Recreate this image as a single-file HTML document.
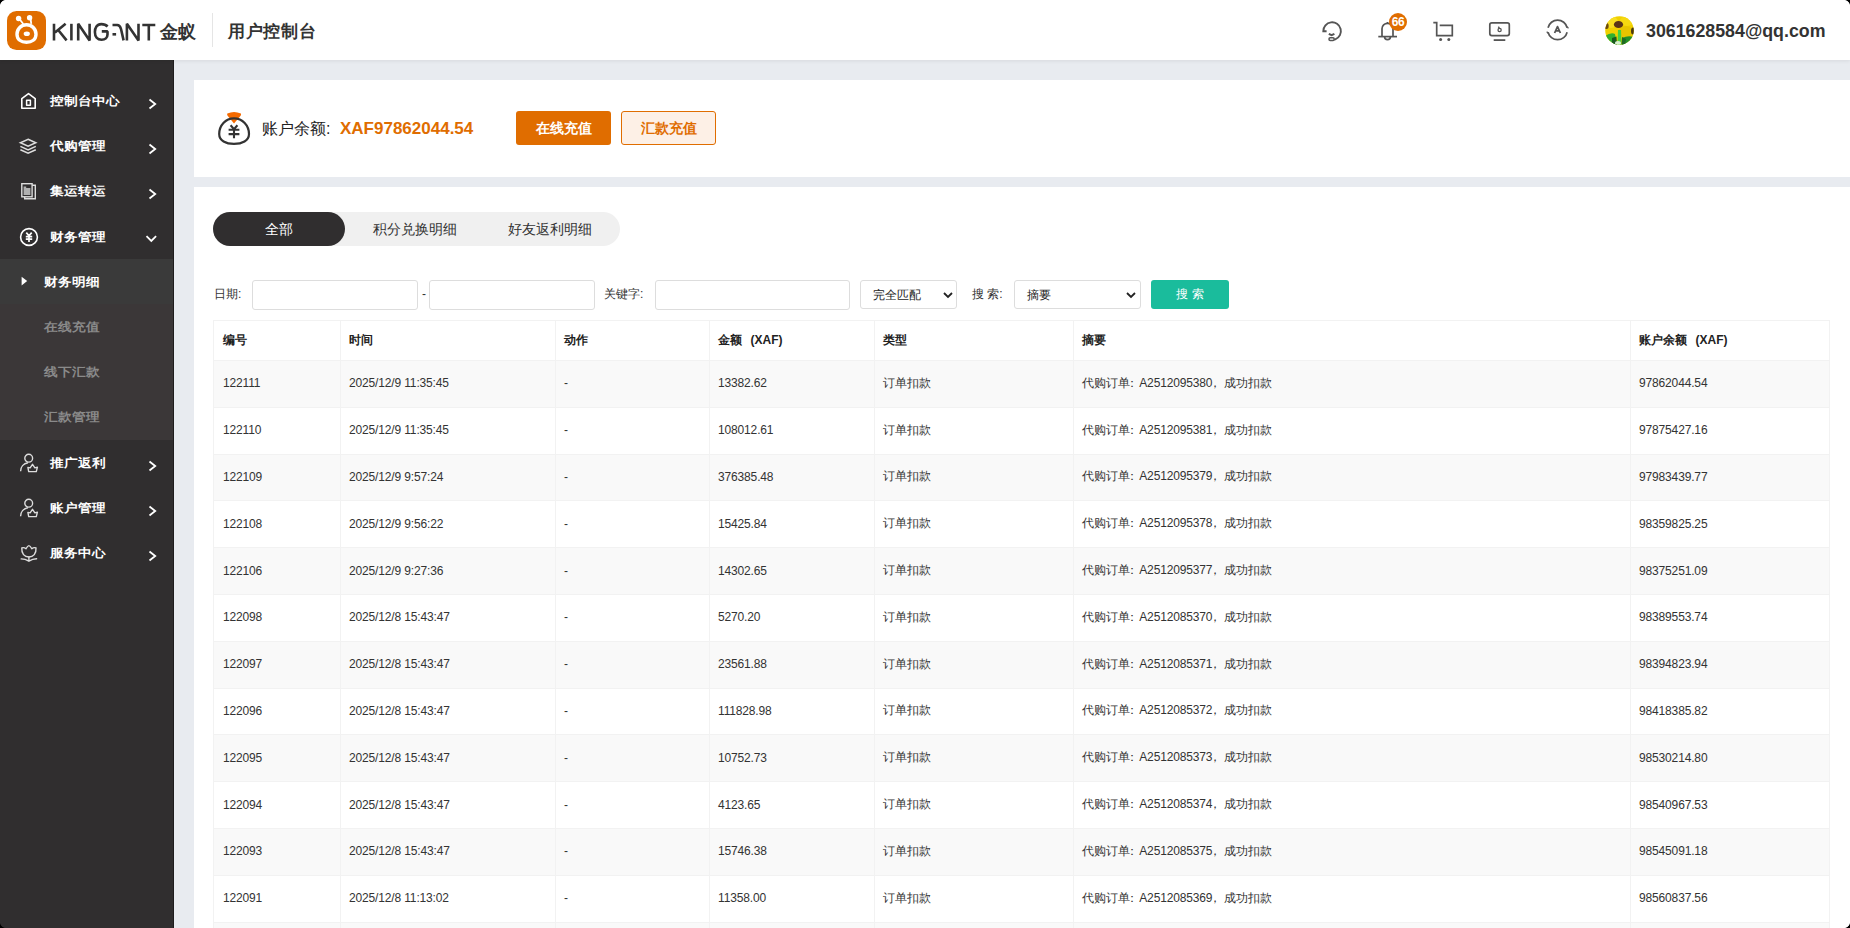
<!DOCTYPE html>
<html><head><meta charset="utf-8">
<style>
*{margin:0;padding:0;box-sizing:border-box}
html,body{width:1850px;height:928px;overflow:hidden;background:#e8ebf0;font-family:"Liberation Sans",sans-serif;color:#333}
.abs{position:absolute}
#hdr{position:absolute;left:0;top:0;width:1850px;height:60px;background:#fff;z-index:2;box-shadow:0 1px 4px rgba(0,0,0,0.08)}
#side{position:absolute;left:0;top:60px;width:174px;height:868px;background:#302e2f;z-index:1}
.mi{position:absolute;left:0;width:174px;height:45px;color:#fff;font-size:13.7px;font-weight:bold}
.mi .t{position:absolute;left:50px;top:15px;line-height:17px;transform:scaleY(0.88)}
.mi svg.ic{position:absolute;left:18px;top:12px}
.mi svg.ch{position:absolute;left:144px;top:16px}
.sub{position:absolute;left:0;width:174px;height:45px;color:#8a8a8a;font-size:13.7px;font-weight:bold}
.sub .t{position:absolute;left:44px;top:15px;line-height:17px;transform:scaleY(0.88)}
.card{position:absolute;background:#fff}
table{border-collapse:collapse;position:absolute;left:213px;top:320px;width:1616px;font-size:12px;table-layout:fixed}
td,th{border:1px solid #f2f2f2;text-align:left;padding:0 0 1px 9px;height:46.8px;white-space:nowrap;color:#333;font-weight:500}
th{height:40px;font-weight:bold;color:#222}
tr.g td{background:#f9f9f9}
td i{font-style:normal}
td+td,th+th{padding-left:8px}
td i.c{margin-left:-3.5px;margin-right:1.5px}
td i.m{margin-left:-3.5px;margin-right:3.5px}
td{letter-spacing:-0.15px}
.btn{position:absolute;height:34px;border-radius:3px;font-size:14px;text-align:center;line-height:34px;font-weight:bold}
.inp{position:absolute;top:280px;height:30px;border:1px solid #ddd;border-radius:3px;background:#fff}
.lbl{position:absolute;top:287px;font-size:12px;color:#333;line-height:14px}
</style></head><body>
<div id="hdr">
  <svg class="abs" style="left:7px;top:11px" width="39" height="39" viewBox="0 0 39 39">
    <rect x="0" y="0" width="39" height="39" rx="9.5" fill="#e06d00"/>
    <path d="M19.5,13.7 C24.8,13.7 29,18 29,23.2 C29,28.6 24.8,31.3 19.5,31.3 C14.2,31.3 10,28.6 10,23.2 C10,18 14.2,13.7 19.5,13.7 Z" fill="none" stroke="#fff" stroke-width="3.4"/>
    <ellipse cx="19.8" cy="22.8" rx="3.1" ry="2.3" fill="#fff"/>
    <circle cx="11.6" cy="7.5" r="2.7" fill="#fff"/>
    <circle cx="22.6" cy="6.8" r="2.7" fill="#fff"/>
    <path d="M13,8.8 L16.3,13 M23.6,8 L24.3,12.8" stroke="#fff" stroke-width="1.8" fill="none"/>
  </svg>
  <svg class="abs" style="left:50px;top:20px" width="112" height="24" viewBox="50 20 112 24">
    <g fill="none" stroke="#333" stroke-width="2.6" stroke-linejoin="bevel">
      <path d="M54,23.8 V40.4 M65.6,23.8 L55,32.4 M58.2,30 L66.6,40.4"/>
      <path d="M71.4,23.8 V40.4"/>
      <path d="M78.2,40.4 V23.8 L89.6,40.4 V23.8"/>
      <path d="M107.6,26.5 C106,24.8 103.8,24.1 101.3,24.1 C96.8,24.1 94.9,28 94.9,32.1 C94.9,36.6 97.3,39.8 101.6,39.8 C105.2,39.8 107.5,37.7 107.5,34.5 V31.4 H101.8"/>
      <path d="M112.5,25 H117.2 C119.5,25 120.4,26.8 121,29 L123.6,40.4"/>
      <path d="M126.9,40.4 V23.8 L138.5,40.4 V23.8"/>
      <path d="M142.3,25 H155.3 M148.8,25 V40.4"/>
    </g>
    <rect x="112.5" y="33" width="3.6" height="2.6" fill="#333"/>
  </svg>
  <div class="abs" style="left:160px;top:20px;font-size:17.5px;color:#333;line-height:24px;font-weight:bold">金蚁</div>
  <div class="abs" style="left:212px;top:13px;width:1px;height:34px;background:#e5e5e5"></div>
  <div class="abs" style="left:228px;top:20px;font-size:17.3px;letter-spacing:0.7px;font-weight:bold;color:#333;line-height:22px">用户控制台</div>

  <svg class="abs" style="left:1320px;top:19px" width="24" height="24" viewBox="0 0 24 24" fill="none" stroke="#555" stroke-width="1.9" stroke-linecap="butt">
    <path d="M6.6,12.2 H3.3 A8.8,8.8 0 1 1 15.3,20.3 L14.2,20.6"/>
    <path d="M8.8,14.8 L11.6,16.2 L14.4,14.8" stroke-width="2"/>
    <rect x="9" y="18.8" width="5.2" height="2.6" rx="1.2" stroke-width="1.5"/>
  </svg>
  <svg class="abs" style="left:1376px;top:19px" width="24" height="24" viewBox="0 0 24 24" fill="none" stroke="#555" stroke-width="1.7">
    <path d="M6,17.6 V9.8 A5.5,5.5 0 0 1 17,9.8 V17.6"/>
    <path d="M2.3,17.6 H21"/>
    <path d="M8.6,17.8 A2.9,2.9 0 0 0 14.4,17.8" />
    <path d="M11.5,4.4 V3"/>
  </svg>
  <div class="abs" style="left:1389px;top:13px;width:18px;height:18px;border-radius:9px;background:#e06d00;color:#fff;font-size:12px;font-weight:bold;line-height:18px;text-align:center;letter-spacing:-0.3px">66</div>
  <svg class="abs" style="left:1430px;top:19px" width="26" height="24" viewBox="0 0 26 24" fill="none" stroke="#555" stroke-width="1.7">
    <path d="M3.3,3.7 H6.7 V16.7 H22.3 V6.3 H9.7"/>
    <circle cx="10.6" cy="20.6" r="1.5" fill="#555" stroke="none"/>
    <circle cx="18.8" cy="20.6" r="1.5" fill="#555" stroke="none"/>
  </svg>
  <svg class="abs" style="left:1486px;top:19px" width="26" height="24" viewBox="0 0 26 24" fill="none" stroke="#555" stroke-width="1.7">
    <rect x="3.8" y="3.8" width="19.5" height="12.8" rx="2"/>
    <path d="M7.7,21.1 H19.3" stroke-width="1.8"/>
    <path d="M12.4,7.6 L13.4,9.6" stroke-width="1.3"/><circle cx="13.6" cy="11" r="1.6" stroke-width="1.3"/>
  </svg>
  <svg class="abs" style="left:1545px;top:18px" width="26" height="24" viewBox="0 0 26 24" fill="none" stroke="#555" stroke-width="1.7">
    <path d="M3.04,9.75 A9.8,9.8 0 0 1 22.16,9.75"/>
    <path d="M22.13,14.2 A9.8,9.8 0 0 1 3.07,14.2"/>
    <path d="M22.3,9.9 L23.3,9.1 M2.9,14.1 L1.9,14.9" stroke-width="2"/>
    <path d="M9.6,15 L12.5,8.6 L15.4,15 M10.6,12.9 H14.4" stroke-width="1.8" stroke-linejoin="round"/>
  </svg>
  <svg class="abs" style="left:1605px;top:16px" width="29" height="29" viewBox="0 0 29 29">
    <defs><clipPath id="av"><circle cx="14.5" cy="14.5" r="14.3"/></clipPath></defs>
    <g clip-path="url(#av)">
      <rect width="29" height="29" fill="#f0d000"/>
      <ellipse cx="6" cy="6" rx="7" ry="6" fill="#f8de20"/>
      <ellipse cx="22" cy="5" rx="7" ry="5" fill="#f6d810"/>
      <ellipse cx="21" cy="16" rx="8" ry="6" fill="#e8c400"/>
      <ellipse cx="13.5" cy="8.5" rx="4.6" ry="3.6" fill="#5a3418"/>
      <ellipse cx="1.5" cy="10" rx="2.2" ry="3" fill="#6a4a10"/>
      <ellipse cx="28" cy="15" rx="2" ry="3.5" fill="#4a3a10"/>
      <path d="M0,20 Q6,16 10,18 L12,29 L0,29 Z" fill="#30b030"/>
      <path d="M17,22 Q23,19 29,21 L29,29 L17,29 Z" fill="#22902a"/>
      <path d="M13,14 L16,14 L16.5,29 L12.5,29 Z" fill="#44d040"/>
      <path d="M7,22 L11.5,20.5 L12,29 L7,29 Z" fill="#1a5a20"/>
      <path d="M17,21 L21,23 L20,29 L16.5,29 Z" fill="#1e6a24"/>
      <ellipse cx="13" cy="27" rx="3" ry="2" fill="#d8f0d0"/>
    </g>
  </svg>
  <div class="abs" style="left:1646px;top:20px;font-size:17.8px;font-weight:bold;color:#333;line-height:22px">3061628584@qq.com</div>
</div>
<div id="side">
  <div class="mi" style="top:18px">
    <svg class="ic" width="22" height="22" viewBox="0 0 22 22" fill="none" stroke="#fff" stroke-width="1.6" stroke-linejoin="round"><path d="M3.8,8.6 L10.5,3.6 L17.2,8.6 V18.2 H3.8 Z"/><rect x="8.6" y="10.3" width="3.8" height="5" stroke-width="1.5"/></svg>
    <span class="t">控制台中心</span>
    <svg class="ch" width="16" height="20" viewBox="0 0 16 20" fill="none" stroke="#fff" stroke-width="1.8"><path d="M5.5,5.5 L11.2,10 L5.5,14.5"/></svg>
  </div>
  <div class="mi" style="top:63px">
    <svg class="ic" width="22" height="22" viewBox="0 0 22 22" fill="none" stroke="#ddd" stroke-width="1.5"><path d="M10.1,4.3 L17.8,7.8 L10.1,11.3 L2.4,7.8 Z"/><path d="M2.4,11.4 L10.1,14.9 L17.8,11.4"/><path d="M2.4,14.8 L10.1,18.3 L17.8,14.8"/></svg>
    <span class="t">代购管理</span>
    <svg class="ch" width="16" height="20" viewBox="0 0 16 20" fill="none" stroke="#fff" stroke-width="1.8"><path d="M5.5,5.5 L11.2,10 L5.5,14.5"/></svg>
  </div>
  <div class="mi" style="top:108px">
    <svg class="ic" width="22" height="22" viewBox="0 0 22 22" fill="none" stroke="#ddd" stroke-width="1.4"><rect x="3.8" y="3.7" width="10.3" height="13.1"/><path d="M14.1,5.2 H17.3 V18.8 H6.7 V16.8"/><path d="M5.6,6.6 H8.2 V8 H12.4 V15 H5.6 Z" fill="#b0b0b0" stroke="none"/></svg>
    <span class="t">集运转运</span>
    <svg class="ch" width="16" height="20" viewBox="0 0 16 20" fill="none" stroke="#fff" stroke-width="1.8"><path d="M5.5,5.5 L11.2,10 L5.5,14.5"/></svg>
  </div>
  <div class="mi" style="top:154px">
    <svg class="ic" width="22" height="22" viewBox="0 0 22 22" fill="none" stroke="#fff" stroke-width="1.6"><circle cx="11" cy="11" r="8.4"/><path d="M8.3,6.6 L11,9.8 L13.7,6.6 M7.8,10.6 H14.2 M7.8,13.2 H14.2 M11,9.8 V16" stroke-width="1.7"/></svg>
    <span class="t">财务管理</span>
    <svg class="ch" width="16" height="20" viewBox="0 0 16 20" fill="none" stroke="#fff" stroke-width="1.8"><path d="M2.5,6.2 L7.3,11 L12.1,6.2"/></svg>
  </div>
  <div class="abs" style="left:0;top:199px;width:174px;height:181px;background:#3b3738"></div>
  <div class="sub" style="top:199px;background:#3a3a3a;color:#fff">
    <svg class="abs" style="left:20px;top:16px" width="10" height="12" viewBox="0 0 10 12"><path d="M1.6,1.8 L7.2,6 L1.6,10.4 Z" fill="#fff"/></svg>
    <span class="t">财务明细</span>
  </div>
  <div class="sub" style="top:244px"><span class="t">在线充值</span></div>
  <div class="sub" style="top:289px"><span class="t">线下汇款</span></div>
  <div class="sub" style="top:334px"><span class="t">汇款管理</span></div>
  <div class="mi" style="top:380px">
    <svg class="ic" width="22" height="22" viewBox="0 0 22 22" fill="none" stroke="#ddd" stroke-width="1.4"><circle cx="10.7" cy="6.2" r="3.9"/><path d="M2.6,19.3 C2.6,15 5.5,11.5 10,10.8"/><path d="M9.9,15.4 L12.1,15.9 L14.5,12.3 L16.9,15.9 L19.4,15.1 L18.3,19.6 H10.7 Z" stroke-linejoin="round"/></svg>
    <span class="t">推广返利</span>
    <svg class="ch" width="16" height="20" viewBox="0 0 16 20" fill="none" stroke="#fff" stroke-width="1.8"><path d="M5.5,5.5 L11.2,10 L5.5,14.5"/></svg>
  </div>
  <div class="mi" style="top:425px">
    <svg class="ic" width="22" height="22" viewBox="0 0 22 22" fill="none" stroke="#ddd" stroke-width="1.4"><circle cx="10.7" cy="6.2" r="3.9"/><path d="M2.6,19.3 C2.6,15 5.5,11.5 10,10.8"/><path d="M9.9,15.4 L12.1,15.9 L14.5,12.3 L16.9,15.9 L19.4,15.1 L18.3,19.6 H10.7 Z" stroke-linejoin="round"/></svg>
    <span class="t">账户管理</span>
    <svg class="ch" width="16" height="20" viewBox="0 0 16 20" fill="none" stroke="#fff" stroke-width="1.8"><path d="M5.5,5.5 L11.2,10 L5.5,14.5"/></svg>
  </div>
  <div class="mi" style="top:470px">
    <svg class="ic" width="22" height="22" viewBox="0 0 22 22" fill="none" stroke="#ddd" stroke-width="1.4"><path d="M3.8,6 Q5.8,5 8,6.8 Q9.6,3.6 10.9,3.6 Q12.2,3.6 13.8,6.8 Q16,5 18,6 C18.4,11.6 15.4,15 10.9,15 C6.4,15 3.4,11.6 3.8,6 Z" stroke-linejoin="round"/><path d="M3.2,16.9 Q7.2,16.9 10.9,19.2 Q14.6,16.9 18.6,16.8 M10.9,15 V19" stroke-linecap="round"/></svg>
    <span class="t">服务中心</span>
    <svg class="ch" width="16" height="20" viewBox="0 0 16 20" fill="none" stroke="#fff" stroke-width="1.8"><path d="M5.5,5.5 L11.2,10 L5.5,14.5"/></svg>
  </div>
  <div class="abs" style="left:173px;top:0;width:1px;height:868px;background:#1e1c1d"></div>
</div>
<div class="card" style="left:194px;top:80px;width:1656px;height:97px"></div>
<div class="card" style="left:194px;top:187px;width:1656px;height:741px"></div>
<svg class="abs" style="left:216px;top:110px" width="36" height="36" viewBox="0 0 36 36">
  <path d="M11.3,3.6 Q18,0.6 24.9,3.6 Q25.4,4.6 24.6,5.8 L18,13.4 L11.6,5.8 Q10.8,4.6 11.3,3.6 Z" fill="#f56a00"/>
  <path d="M18,8.4 C9.5,8.4 3.2,15.5 3.2,24 C3.2,30.8 10,33.8 18,33.8 C26,33.8 33,30.8 33,24 C33,15.5 26.5,8.4 18,8.4 Z" fill="none" stroke="#333" stroke-width="2.2"/>
  <path d="M14.6,15.2 L18,19.2 L21.4,15.2 M12.6,19.8 H23.4 M12.6,24.1 H23.4 M18,19.2 V28.2" fill="none" stroke="#333" stroke-width="2.1"/>
</svg>
<div class="abs" style="left:262px;top:119px;font-size:16px;color:#222;line-height:20px;font-weight:500">账户余额:</div>
<div class="abs" style="left:340px;top:119px;font-size:17px;color:#e06d00;line-height:20px;font-weight:bold">XAF97862044.54</div>
<div class="btn" style="left:516px;top:111px;width:95px;background:#e06d00;color:#fff">在线充值</div>
<div class="btn" style="left:621px;top:111px;width:95px;background:#fdf0e6;color:#e06d00;border:1px solid #e06d00;line-height:32px">汇款充值</div>

<div class="abs" style="left:213px;top:212px;width:407px;height:34px;border-radius:17px;background:#f0f0f0"></div>
<div class="abs" style="left:213px;top:212px;width:132px;height:34px;border-radius:17px;background:#302e2f;color:#fff;font-size:14px;line-height:34px;text-align:center">全部</div>
<div class="abs" style="left:373px;top:212px;font-size:14px;line-height:34px;color:#333">积分兑换明细</div>
<div class="abs" style="left:508px;top:212px;font-size:14px;line-height:34px;color:#333">好友返利明细</div>

<div class="lbl" style="left:214px">日期:</div>
<div class="inp" style="left:252px;width:166px"></div>
<div class="lbl" style="left:422px">-</div>
<div class="inp" style="left:429px;width:166px"></div>
<div class="lbl" style="left:604px">关键字:</div>
<div class="inp" style="left:655px;width:195px"></div>
<div class="inp" style="left:860px;width:97px;height:29px"><span class="abs" style="left:12px;top:7px;font-size:12px;line-height:14px;color:#222">完全匹配</span>
  <svg class="abs" style="left:81px;top:9px" width="12" height="10" viewBox="0 0 12 10"><path d="M2,3 L6,7 L10,3" fill="none" stroke="#222" stroke-width="1.8"/></svg></div>
<div class="lbl" style="left:972px">搜 索:</div>
<div class="inp" style="left:1014px;width:127px;height:29px"><span class="abs" style="left:12px;top:7px;font-size:12px;line-height:14px;color:#222">摘要</span>
  <svg class="abs" style="left:110px;top:9px" width="12" height="10" viewBox="0 0 12 10"><path d="M2,3 L6,7 L10,3" fill="none" stroke="#222" stroke-width="1.8"/></svg></div>
<div class="abs" style="left:1151px;top:280px;width:78px;height:29px;border-radius:3px;background:#1abc9c;color:#fff;font-size:12px;font-weight:500;line-height:29px;text-align:center">搜 索</div>

<table>
<colgroup><col style="width:127px"><col style="width:215px"><col style="width:154px"><col style="width:165px"><col style="width:199px"><col style="width:557px"><col style="width:199px"></colgroup>
<tr><th>编号</th><th>时间</th><th>动作</th><th>金额<span style="margin-left:8.5px">(XAF)</span></th><th>类型</th><th>摘要</th><th>账户余额<span style="margin-left:8.5px">(XAF)</span></th></tr>
<tr class="g"><td>122111</td><td>2025/12/9 11:35:45</td><td>-</td><td>13382.62</td><td>订单扣款</td><td>代购订单<i class="c">：</i>A2512095380<i class="m">，</i>成功扣款</td><td>97862044.54</td></tr>
<tr><td>122110</td><td>2025/12/9 11:35:45</td><td>-</td><td>108012.61</td><td>订单扣款</td><td>代购订单<i class="c">：</i>A2512095381<i class="m">，</i>成功扣款</td><td>97875427.16</td></tr>
<tr class="g"><td>122109</td><td>2025/12/9 9:57:24</td><td>-</td><td>376385.48</td><td>订单扣款</td><td>代购订单<i class="c">：</i>A2512095379<i class="m">，</i>成功扣款</td><td>97983439.77</td></tr>
<tr><td>122108</td><td>2025/12/9 9:56:22</td><td>-</td><td>15425.84</td><td>订单扣款</td><td>代购订单<i class="c">：</i>A2512095378<i class="m">，</i>成功扣款</td><td>98359825.25</td></tr>
<tr class="g"><td>122106</td><td>2025/12/9 9:27:36</td><td>-</td><td>14302.65</td><td>订单扣款</td><td>代购订单<i class="c">：</i>A2512095377<i class="m">，</i>成功扣款</td><td>98375251.09</td></tr>
<tr><td>122098</td><td>2025/12/8 15:43:47</td><td>-</td><td>5270.20</td><td>订单扣款</td><td>代购订单<i class="c">：</i>A2512085370<i class="m">，</i>成功扣款</td><td>98389553.74</td></tr>
<tr class="g"><td>122097</td><td>2025/12/8 15:43:47</td><td>-</td><td>23561.88</td><td>订单扣款</td><td>代购订单<i class="c">：</i>A2512085371<i class="m">，</i>成功扣款</td><td>98394823.94</td></tr>
<tr><td>122096</td><td>2025/12/8 15:43:47</td><td>-</td><td>111828.98</td><td>订单扣款</td><td>代购订单<i class="c">：</i>A2512085372<i class="m">，</i>成功扣款</td><td>98418385.82</td></tr>
<tr class="g"><td>122095</td><td>2025/12/8 15:43:47</td><td>-</td><td>10752.73</td><td>订单扣款</td><td>代购订单<i class="c">：</i>A2512085373<i class="m">，</i>成功扣款</td><td>98530214.80</td></tr>
<tr><td>122094</td><td>2025/12/8 15:43:47</td><td>-</td><td>4123.65</td><td>订单扣款</td><td>代购订单<i class="c">：</i>A2512085374<i class="m">，</i>成功扣款</td><td>98540967.53</td></tr>
<tr class="g"><td>122093</td><td>2025/12/8 15:43:47</td><td>-</td><td>15746.38</td><td>订单扣款</td><td>代购订单<i class="c">：</i>A2512085375<i class="m">，</i>成功扣款</td><td>98545091.18</td></tr>
<tr><td>122091</td><td>2025/12/8 11:13:02</td><td>-</td><td>11358.00</td><td>订单扣款</td><td>代购订单<i class="c">：</i>A2512085369<i class="m">，</i>成功扣款</td><td>98560837.56</td></tr>
<tr class="g"><td>122090</td><td>2025/12/8 11:13:02</td><td>-</td><td>11358.00</td><td>订单扣款</td><td>代购订单<i class="c">：</i>A2512085368<i class="m">，</i>成功扣款</td><td>98572195.56</td></tr></table>
<div class="abs" style="z-index:10;left:0;top:0;width:6px;height:6px;background:radial-gradient(circle at 100% 100%,transparent 5.6px,#000 6.4px)"></div>
<div class="abs" style="z-index:10;left:1844px;top:0;width:6px;height:6px;background:radial-gradient(circle at 0 100%,transparent 5.6px,#000 6.4px)"></div>
<div class="abs" style="z-index:10;left:0;top:922px;width:6px;height:6px;background:radial-gradient(circle at 100% 0,transparent 5.6px,#000 6.4px)"></div>
<div class="abs" style="z-index:10;left:1844px;top:922px;width:6px;height:6px;background:radial-gradient(circle at 0 0,transparent 5.6px,#000 6.4px)"></div>
</body></html>
